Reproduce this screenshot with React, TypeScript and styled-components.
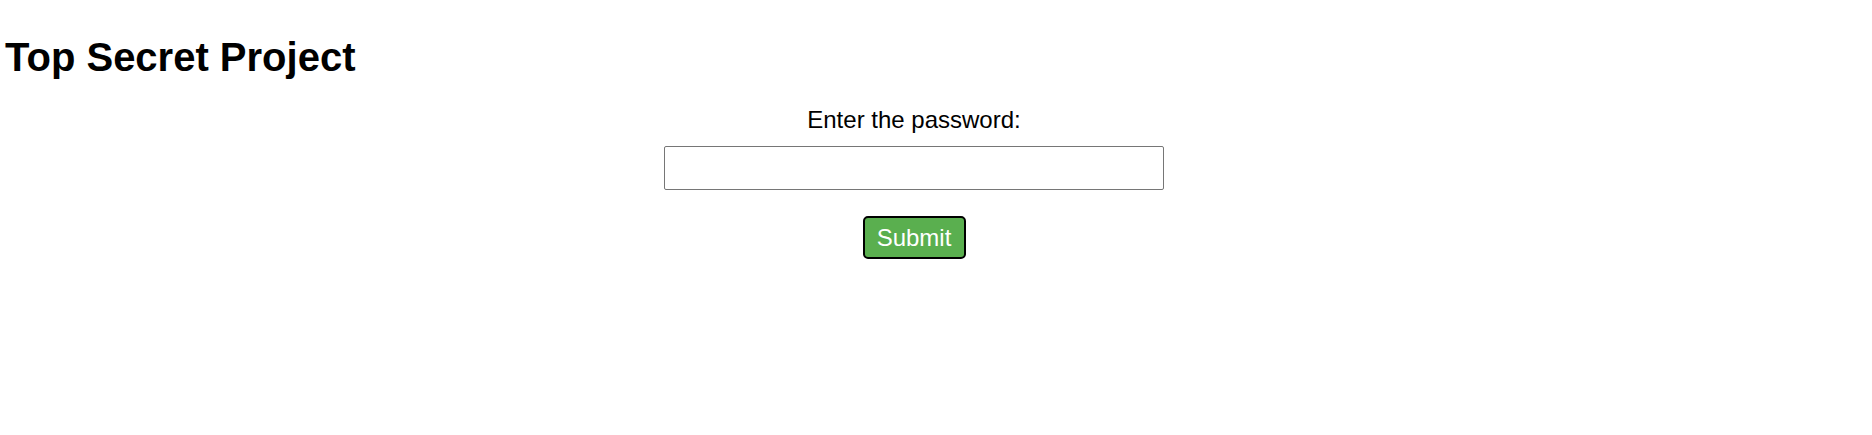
import { useState } from 'react';
import { styled, createGlobalStyle } from 'styled-components';

const GlobalStyle = createGlobalStyle`
  body {
    margin: 0;
    background: #ffffff;
    font-family: 'Liberation Sans', Arial, sans-serif;
    color: #000000;
  }
`;

export default function App() {
  const [password, setPassword] = useState('');

  return (
    <>
      <GlobalStyle />
      <StyledPage>
        <StyledTitle>Top Secret Project</StyledTitle>
        <StyledForm onSubmit={(event) => event.preventDefault()}>
          <StyledLabel htmlFor="password">Enter the password:</StyledLabel>
          <StyledInput
            id="password"
            type="password"
            value={password}
            onChange={(event) => setPassword(event.target.value)}
          />
          <StyledButton type="submit">Submit</StyledButton>
        </StyledForm>
      </StyledPage>
    </>
  );
}

const StyledPage = styled.div`
  padding: 34px 49px 0 5px;
  display: flex;
  flex-direction: column;
`;

const StyledTitle = styled.h1`
  margin: 0;
  font-size: 40px;
  font-weight: 700;
  line-height: 46px;
`;

const StyledForm = styled.form`
  margin-top: 26px;
  display: flex;
  flex-direction: column;
  align-items: center;
`;

const StyledLabel = styled.label`
  font-size: 24px;
  line-height: 28px;
`;

const StyledInput = styled.input`
  box-sizing: border-box;
  margin-top: 12px;
  width: 500px;
  height: 44px;
  border: 1px solid #767676;
  border-radius: 2px;
  padding: 0 8px;
  font-size: 20px;
  font-family: inherit;
`;

const StyledButton = styled.button`
  box-sizing: border-box;
  margin-top: 26px;
  width: 103px;
  height: 43px;
  display: flex;
  align-items: center;
  justify-content: center;
  background: #5aaf4f;
  color: #ffffff;
  border: 2px solid #000000;
  border-radius: 5px;
  font-family: inherit;
  font-size: 24px;
  padding: 0;
  cursor: pointer;
`;
